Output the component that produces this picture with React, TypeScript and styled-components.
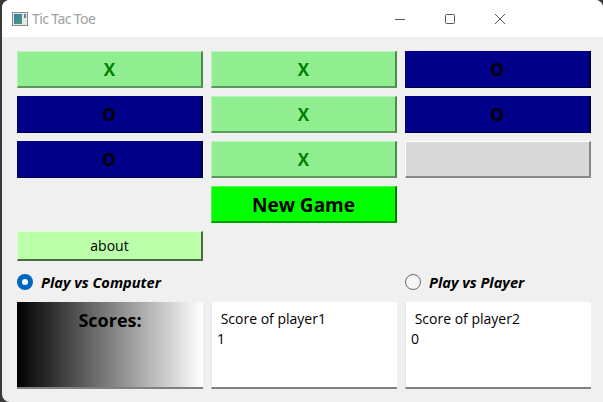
import React from "react";
import styled, { createGlobalStyle, css } from "styled-components";

const Global = createGlobalStyle`
  html, body { margin: 0; padding: 0; }
  body {
    width: 603px; height: 402px; overflow: hidden;
    background: #3a3a3a;
    font-family: "Open Sans", "Noto Sans", "Liberation Sans", sans-serif;
  }
`;

const Window = styled.div`
  margin-left: 2px;
  width: 601px;
  height: 402px;
  background: #f0f0f0;
  border-radius: 8px 8px 0 8px;
  overflow: hidden;
  display: flex;
  flex-direction: column;
`;

const TitleBar = styled.div`
  height: 37px;
  background: #ffffff;
  display: flex;
  align-items: center;
  padding-left: 10px;
  box-sizing: border-box;
`;

const Title = styled.span`
  margin-left: 4px;
  font-size: 14px;
  color: #a0a0a0;
  font-family: "Noto Sans", "Open Sans", sans-serif;
  letter-spacing: -0.6px;
`;

const Controls = styled.div`
  margin-left: auto;
  margin-right: 79px;
  display: flex;
  align-items: center;
`;

const Ctrl = styled.div`
  width: 48px;
  height: 37px;
  display: flex;
  align-items: center;
  justify-content: center;
  margin-left: 2px;
`;

const Body = styled.div`
  padding: 14px 0 0 15px;
  display: grid;
  grid-template-columns: 186px 186px 186px;
  grid-template-rows: 37px 37px 37px 37px 30px 25px 87px;
  column-gap: 8px;
  row-gap: 8px;
`;

type Kind = "x" | "o" | "empty";

const Cell = styled.div<{ $kind: Kind }>`
  box-sizing: border-box;
  display: flex;
  align-items: center;
  justify-content: center;
  font-weight: 700;
  font-size: 17px;
  ${(p) =>
    p.$kind === "x"
      ? css`
          background: #90ee90;
          color: #008000;
          border-top: 1px solid #b9f6b9;
          border-left: 1px solid #b9f6b9;
          border-right: 2px solid #4e8a4e;
          border-bottom: 2px solid #5a9a5a;
        `
      : p.$kind === "o"
      ? css`
          background: #000088;
          color: #000;
          border-right: 2px solid #000040;
          border-bottom: 1px solid #000040;
        `
      : css`
          background: #d9d9d9;
          border-top: 1px solid #ffffff;
          border-left: 1px solid #ffffff;
          border-right: 2px solid #888;
          border-bottom: 2px solid #888;
        `}
`;

const NewGame = styled.div`
  grid-column: 2;
  box-sizing: border-box;
  background: #00ff00;
  border-top: 1px solid #4dff4d;
  border-left: 1px solid #4dff4d;
  border-right: 2px solid #007a00;
  border-bottom: 2px solid #00a000;
  display: flex;
  align-items: center;
  justify-content: center;
  padding-top: 1px;
  font-weight: 700;
  font-size: 19px;
  color: #000;
`;

const About = styled.div`
  grid-column: 1;
  box-sizing: border-box;
  background: #bbffaa;
  border-top: 1px solid #e0ffd6;
  border-left: 1px solid #e0ffd6;
  border-right: 2px solid #4a6a44;
  border-bottom: 2px solid #4a6a44;
  display: flex;
  align-items: center;
  justify-content: center;
  font-size: 14px;
  color: #000;
`;

const RadioRow = styled.div<{ $col: number }>`
  grid-column: ${(p) => p.$col};
  display: flex;
  align-items: center;
  gap: 8px;
`;

const Circle = styled.span<{ $on: boolean }>`
  width: 16px;
  height: 16px;
  border-radius: 50%;
  box-sizing: border-box;
  flex: none;
  display: flex;
  align-items: center;
  justify-content: center;
  ${(p) =>
    p.$on
      ? css`
          background: #0067c0;
          &::after {
            content: "";
            width: 6px;
            height: 6px;
            border-radius: 50%;
            background: #fff;
          }
        `
      : css`
          background: #f5f5f5;
          border: 1px solid #6a6a6a;
        `}
`;

const RadioLabel = styled.span`
  font-weight: 700;
  font-style: italic;
  font-size: 14.6px;
  color: #000;
`;

const ScoresBox = styled.div`
  box-sizing: border-box;
  background: linear-gradient(to right, #000 0%, #fff 100%);
  border-bottom: 2px solid #808080;
  display: flex;
  justify-content: center;
  padding-top: 6px;
  font-weight: 700;
  font-size: 18px;
  color: #000;
`;

const ScoreBox = styled.div<{ $col: number }>`
  grid-column: ${(p) => p.$col};
  box-sizing: border-box;
  background: #fff;
  border-bottom: 2px solid #808080;
  border-left: 1px solid #e6e6e6;
  padding: 7px 0 0 5px;
  font-size: 14px;
  line-height: 20px;
  color: #000;
  white-space: pre;
`;

const board: Kind[] = ["x", "x", "o", "o", "x", "o", "o", "x", "empty"];

export default function App() {
  return (
    <>
      <Global />
      <Window>
        <TitleBar>
          <svg width="16" height="14" viewBox="0 0 16 14">
            <rect x="0.5" y="0.5" width="15" height="13" fill="#e8e8e8" stroke="#8a8a8a" />
            <defs>
              <linearGradient id="ig" x1="0" y1="0" x2="1" y2="1">
                <stop offset="0" stopColor="#3a7ab0" />
                <stop offset="1" stopColor="#4aa070" />
              </linearGradient>
            </defs>
            <rect x="2" y="2" width="8" height="10" fill="url(#ig)" />
            <rect x="12" y="2" width="2" height="4" fill="#5a8ab0" />
          </svg>
          <Title>Tic Tac Toe</Title>
          <Controls>
            <Ctrl>
              <svg width="12" height="12" viewBox="0 0 12 12">
                <line x1="1" y1="6.5" x2="11" y2="6.5" stroke="#555" strokeWidth="1" />
              </svg>
            </Ctrl>
            <Ctrl>
              <svg width="12" height="12" viewBox="0 0 12 12">
                <rect x="1.5" y="1.5" width="9" height="9" rx="1" fill="none" stroke="#555" strokeWidth="1" />
              </svg>
            </Ctrl>
            <Ctrl>
              <svg width="12" height="12" viewBox="0 0 12 12">
                <path d="M1 1 L11 11 M11 1 L1 11" stroke="#555" strokeWidth="1" />
              </svg>
            </Ctrl>
          </Controls>
        </TitleBar>
        <Body>
          {board.map((k, i) => (
            <Cell key={i} $kind={k}>
              {k === "x" ? "X" : k === "o" ? "O" : ""}
            </Cell>
          ))}
          <NewGame>New Game</NewGame>
          <About>about</About>
          <RadioRow $col={1}>
            <Circle $on={true} />
            <RadioLabel>Play vs Computer</RadioLabel>
          </RadioRow>
          <RadioRow $col={3}>
            <Circle $on={false} />
            <RadioLabel>Play vs Player</RadioLabel>
          </RadioRow>
          <ScoresBox>Scores:</ScoresBox>
          <ScoreBox $col={2}>{" Score of player1\n1"}</ScoreBox>
          <ScoreBox $col={3}>{" Score of player2\n0"}</ScoreBox>
        </Body>
      </Window>
    </>
  );
}
